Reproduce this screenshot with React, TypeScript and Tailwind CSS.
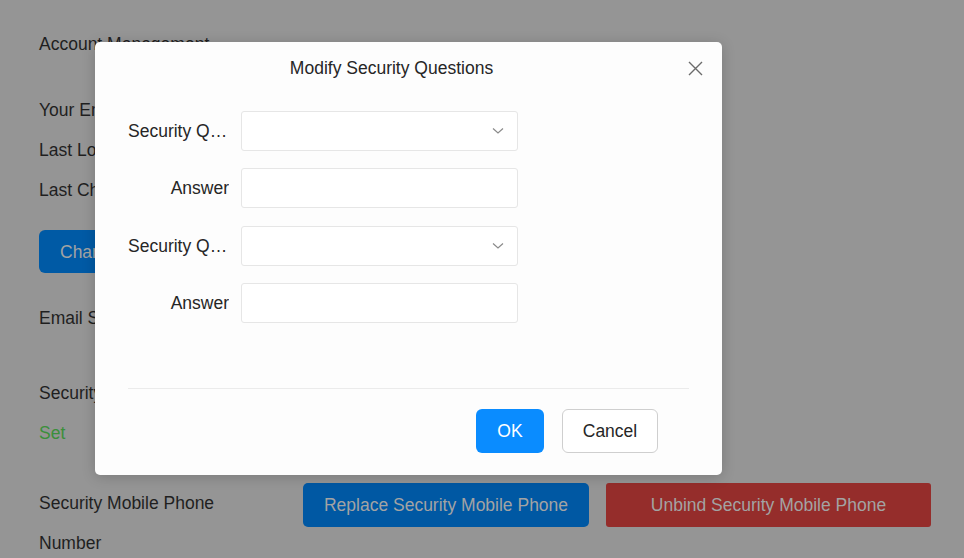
import React from "react";

const font = { fontFamily: '"Liberation Sans", Arial, sans-serif' };

function Chevron() {
  return (
    <svg width="12" height="8" viewBox="0 0 12 8" className="text-[#8a8a8a]">
      <path d="M1 1.5 L6 6 L11 1.5" fill="none" stroke="currentColor" strokeWidth="1.2" />
    </svg>
  );
}

function SelectBox() {
  return (
    <div className="flex h-[40px] w-[277px] items-center justify-end rounded-[3px] border border-[#e6e6e6] bg-white pr-[13px]">
      <Chevron />
    </div>
  );
}

function InputBox() {
  return <div className="h-[40px] w-[277px] rounded-[3px] border border-[#e6e6e6] bg-white" />;
}

function Row({ label, children }: { label: string; children: React.ReactNode }) {
  return (
    <div className="flex items-center">
      <div className="w-[101px] truncate text-right text-[17.5px] text-[#262626]">{label}</div>
      <div className="ml-[12px]">{children}</div>
    </div>
  );
}

export default function App() {
  return (
    <div className="relative h-[558px] w-[964px] overflow-hidden bg-[#959595] text-[17.5px] text-[#1f1f1f]" style={font}>
      {/* background page */}
      <div className="pl-[39px] pt-[24px] leading-[40px]">
        <div>Account Management</div>
        <div className="mt-[26px]">Your Email</div>
        <div>Last Login Time</div>
        <div>Last Change Time</div>
        <div className="mt-[20px] flex h-[43px] w-[190px] items-center rounded-[6px] bg-[#005aa5] px-[21px] text-[#a3a3a3]">
          Change Password
        </div>
        <div className="mt-[25px]">Email Security</div>
        <div className="mt-[35px]">Security Questions</div>
        <div className="text-[#3b8f3b]">Set</div>
        <div className="mt-[30px] flex">
          <div className="w-[200px]">Security Mobile Phone Number</div>
          <div className="ml-[64px] flex h-[44px] gap-[17px]">
            <div className="flex w-[286px] items-center justify-center rounded-[5px] bg-[#0058a3] text-[#a3a3a3]">
              Replace Security Mobile Phone
            </div>
            <div className="flex w-[325px] items-center justify-center rounded-[3px] bg-[#952d2b] text-[#a3a3a3]">
              Unbind Security Mobile Phone
            </div>
          </div>
        </div>
      </div>

      {/* dialog */}
      <div className="absolute left-[95px] top-[42px] flex h-[433px] w-[627px] flex-col rounded-[5px] bg-[#fdfdfd] px-[33px] shadow-[0_2px_14px_rgba(0,0,0,0.18)]">
        <div className="relative flex h-[53px] items-center">
          <div className="flex-1 text-center text-[17.5px] text-[#262626]">Modify Security Questions</div>
          <div className="w-[34px]" />
          <svg width="15" height="15" viewBox="0 0 15 15" className="absolute right-[-14px] top-[19px] text-[#6b6b6b]">
            <path d="M1 1 L14 14 M14 1 L1 14" fill="none" stroke="currentColor" strokeWidth="1.4" />
          </svg>
        </div>
        <div className="mt-[16px] flex flex-col">
          <Row label="Security Question 1">
            <SelectBox />
          </Row>
          <div className="mt-[17px]">
            <Row label="Answer">
              <InputBox />
            </Row>
          </div>
          <div className="mt-[18px]">
            <Row label="Security Question 2">
              <SelectBox />
            </Row>
          </div>
          <div className="mt-[17px]">
            <Row label="Answer">
              <InputBox />
            </Row>
          </div>
        </div>
        <div className="mt-[65px] border-t border-[#ebebeb]" />
        <div className="mt-[20px] flex justify-end gap-[18px] pr-[31px]">
          <button className="h-[44px] w-[68px] rounded-[6px] bg-[#0a8cff] text-[17.5px] text-white">OK</button>
          <button className="h-[44px] w-[96px] rounded-[6px] border border-[#cfcfcf] bg-white text-[17.5px] text-[#262626]">
            Cancel
          </button>
        </div>
      </div>
    </div>
  );
}
